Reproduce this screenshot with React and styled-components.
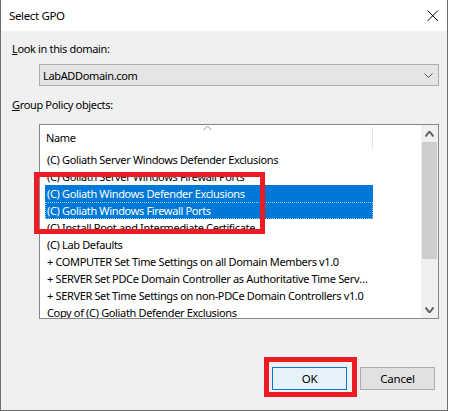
import React from 'react';
import styled, { createGlobalStyle } from 'styled-components';

const GlobalStyle = createGlobalStyle`
  html, body {
    margin: 0;
    padding: 0;
    background: #ffffff;
  }
  body {
    font-family: "Segoe UI", "Noto Sans", sans-serif;
    font-size: 11px;
    letter-spacing: -0.35px;
    color: #000;
  }
`;

const Window = styled.div`
  width: 448px;
  height: 411px;
  box-sizing: border-box;
  border: 1px solid #6e6e6e;
  border-top: none;
  display: flex;
  flex-direction: column;
  background: #f0f0f0;
`;

const TitleBar = styled.div`
  height: 31px;
  flex: none;
  background: #ffffff;
  display: flex;
  align-items: center;
  justify-content: space-between;
  padding: 0 8px 0 8px;
`;

const Title = styled.span`
  font-size: 11.5px;
  line-height: 16px;
`;

const Body = styled.div`
  flex: 1;
  display: flex;
  flex-direction: column;
  padding: 10px 8px 20px 11px;
`;

const Label = styled.div`
  line-height: 16px;
  margin-top: ${props => props.top || 0}px;
`;

const Combo = styled.div`
  margin: 7px 0 0 27px;
  height: 22px;
  box-sizing: border-box;
  border: 1px solid #adadad;
  background: #e5e5e5;
  display: flex;
  align-items: center;
  justify-content: space-between;
  padding: 0 5px 0 3px;
`;

const ListBox = styled.div`
  position: relative;
  margin: 11px 0 0 27px;
  height: 195px;
  box-sizing: border-box;
  border: 1px solid #828790;
  background: #ffffff;
  display: flex;
`;

const ListInner = styled.div`
  flex: 1;
  overflow: hidden;
`;

const Header = styled.div`
  position: relative;
  width: 333px;
  height: 26px;
  line-height: 26px;
  padding-left: 6px;
  box-sizing: border-box;
  &::after {
    content: "";
    position: absolute;
    right: 0;
    top: 2px;
    height: 22px;
    border-right: 1px solid #e5e5e5;
  }
`;

const SortArrow = styled.svg`
  position: absolute;
  left: 163px;
  top: 0;
`;

const Row = styled.div`
  margin-left: 5px;
  width: 328px;
  height: 17px;
  line-height: 17px;
  padding-left: 2px;
  box-sizing: border-box;
  white-space: nowrap;
  overflow: hidden;
  text-overflow: ellipsis;
  background: ${props => (props.selected ? '#0078d7' : 'transparent')};
  color: ${props => (props.selected ? '#ffffff' : '#000000')};
  outline: ${props => (props.focused ? '1px dotted #9fcdf3' : 'none')};
  outline-offset: -1px;
`;

const ScrollBar = styled.div`
  width: 17px;
  flex: none;
  background: #f0f0f0;
  display: flex;
  flex-direction: column;
`;

const ScrollButton = styled.div`
  height: 17px;
  display: flex;
  align-items: center;
  justify-content: center;
  margin-top: ${props => (props.bottom ? 'auto' : '0')};
`;

const Thumb = styled.div`
  height: 117px;
  margin: 0 1px;
  background: #cdcdcd;
`;

const Footer = styled.div`
  margin-top: auto;
  display: flex;
  justify-content: flex-end;
  gap: 13px;
  padding-right: 4px;
`;

const ButtonWrap = styled.div`
  position: relative;
`;

const Button = styled.button`
  width: 75px;
  height: 23px;
  box-sizing: border-box;
  font-family: inherit;
  font-size: 11.5px;
  letter-spacing: -0.25px;
  color: #000;
  padding: 0;
  border: 1px solid ${props => (props.primary ? '#0078d7' : '#adadad')};
  background: ${props => (props.primary ? '#e5f1fb' : '#e1e1e1')};
`;

const Marker = styled.div`
  position: absolute;
  box-sizing: border-box;
  border: 5px solid #ed1c24;
  pointer-events: none;
`;

const rows = [
  '(C) Goliath Server Windows Defender Exclusions',
  '(C) Goliath Server Windows Firewall Ports',
  '(C) Goliath Windows Defender Exclusions',
  '(C) Goliath Windows Firewall Ports',
  '(C) Install Root and Intermediate Certificate',
  '(C) Lab Defaults',
  '+ COMPUTER Set Time Settings on all Domain Members v1.0',
  '+ SERVER Set PDCe Domain Controller as Authoritative Time Server v1.0',
  '+ SERVER Set Time Settings on non-PDCe Domain Controllers v1.0',
  'Copy of (C) Goliath Defender Exclusions',
];

function Chevron({ up, color, w = 9, h = 5, sw = 1 }) {
  const d = up ? `M0.5 ${h - 0.5} L${w / 2} 0.5 L${w - 0.5} ${h - 0.5}` : `M0.5 0.5 L${w / 2} ${h - 0.5} L${w - 0.5} 0.5`;
  return (
    <svg width={w} height={h} viewBox={`0 0 ${w} ${h}`}>
      <path d={d} fill="none" stroke={color} strokeWidth={sw} />
    </svg>
  );
}

export default function App() {
  return (
    <>
      <GlobalStyle />
      <Window>
        <TitleBar>
          <Title>Select GPO</Title>
          <svg width="12" height="12" viewBox="0 0 12 12">
            <path d="M0.5 0.5 L11 11 M11 0.5 L0.5 11" stroke="#000" strokeWidth="1" />
          </svg>
        </TitleBar>
        <Body>
          <Label><u>L</u>ook in this domain:</Label>
          <Combo>
            <span>LabADDomain.com</span>
            <Chevron color="#555" w={9} h={5} />
          </Combo>
          <Label top={11}><u>G</u>roup Policy objects:</Label>
          <ListBox>
            <ListInner>
              <Header>
                <SortArrow width="9" height="6" viewBox="0 0 9 6">
                  <path d="M0.5 5 L4.5 1 L8.5 5" fill="none" stroke="#9a9a9a" strokeWidth="1" />
                </SortArrow>
                Name
              </Header>
              {rows.map((r, i) => (
                <Row key={i} selected={i === 2 || i === 3} focused={i === 3}>{r}</Row>
              ))}
            </ListInner>
            <ScrollBar>
              <ScrollButton>
                <Chevron up color="#606060" w={9} h={6} sw={2} />
              </ScrollButton>
              <Thumb />
              <ScrollButton bottom>
                <Chevron color="#606060" w={9} h={6} sw={2} />
              </ScrollButton>
            </ScrollBar>
            <Marker style={{ left: -6, top: 47, width: 231, height: 62 }} />
          </ListBox>
          <Footer>
            <ButtonWrap>
              <Button primary>OK</Button>
              <Marker style={{ left: -8, top: -10, width: 93, height: 40 }} />
            </ButtonWrap>
            <ButtonWrap>
              <Button>Cancel</Button>
            </ButtonWrap>
          </Footer>
        </Body>
      </Window>
    </>
  );
}
